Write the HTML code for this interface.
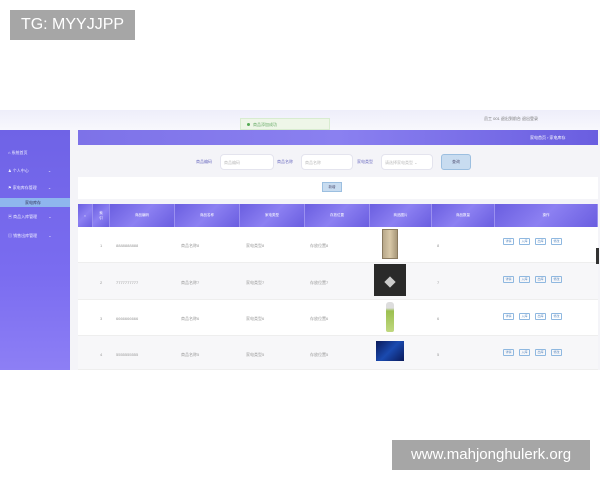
<!DOCTYPE html>
<html><head><meta charset="utf-8"><style>
*{margin:0;padding:0;box-sizing:border-box}
body{width:600px;height:480px;background:#fff;position:relative;overflow:hidden;font-family:"Liberation Sans","Noto Sans CJK SC",sans-serif}
.a{position:absolute}
.t{font-size:4px;color:#888;white-space:nowrap}
.side{left:0;top:130px;width:70px;height:240px;background:linear-gradient(180deg,#6f63e6,#7a6cf0 60%,#8d7ff5)}
.mi{position:absolute;left:8px;font-size:4px;color:#eef;white-space:nowrap}
.th{position:absolute;top:204px;height:23px;background:linear-gradient(135deg,#6a5ee0,#8c80f2 50%,#6a5ee0);border-right:1px solid #9a90f0;font-size:3.5px;color:#fff;display:flex;align-items:center;justify-content:center}
.row{position:absolute;left:78px;width:520px;border-bottom:1px solid #eee}
.c{position:absolute;font-size:4px;color:#999;white-space:nowrap}
.b{position:absolute;width:11px;height:7px;border:1px solid #8fb8e0;border-radius:1px;font-size:3px;color:#5a8ac0;text-align:center;line-height:5px}
</style></head><body>
<div class="a" style="left:10px;top:10px;width:125px;height:30px;background:#a6a6a6;color:#fff;font-size:16px;line-height:30px;text-align:center">TG: MYYJJPP</div>
<div class="a" style="left:392px;top:440px;width:198px;height:30px;background:#a6a6a6;color:#fff;font-size:15px;line-height:30px;text-align:center">www.mahjonghulerk.org</div>

<div class="a" style="left:0;top:110px;width:600px;height:20px;background:linear-gradient(180deg,#eeeefa,#f8f8fd)"></div>
<div class="a t" style="left:484px;top:116px;color:#777">员工 001 退出到前台 退出登录</div>
<div class="a" style="left:240px;top:118px;width:90px;height:12px;background:#eef6e8;border:1px solid #d8ecd0"><span style="position:absolute;left:6px;top:4px;width:3px;height:3px;border-radius:50%;background:#5a5"></span><span class="t" style="position:absolute;left:12px;top:3px;color:#6a6">商品添加成功</span></div>

<div class="a side"></div>
<div class="mi" style="top:150px">⌂ 系统首页</div>
<div class="mi" style="top:168px">♟ 个人中心 <span style="margin-left:18px">⌄</span></div>
<div class="mi" style="top:185px">⚑ 家电库存管理 <span style="margin-left:10px">⌄</span></div>
<div class="a" style="left:0;top:198px;width:70px;height:9px;background:#8fb6ee"></div>
<div class="mi" style="top:200px;left:25px;color:#335">家电库存</div>
<div class="mi" style="top:214px">▣ 商品入库管理 <span style="margin-left:10px">⌄</span></div>
<div class="mi" style="top:233px">▤ 销售出库管理 <span style="margin-left:10px">⌄</span></div>

<div class="a" style="left:70px;top:130px;width:530px;height:240px;background:#f4f4f8"></div>
<div class="a" style="left:78px;top:130px;width:520px;height:15px;background:linear-gradient(90deg,#7d72e8,#8a80f0 50%,#6a5ee0)"></div>
<div class="a t" style="left:530px;top:135px;color:#fff">家电首页 › 家电库存</div>

<div class="a t" style="left:196px;top:159px;color:#6a6ac0">商品编码</div>
<div class="a" style="left:220px;top:154px;width:54px;height:16px;background:#fff;border:1px solid #e4e4ee;border-radius:4px"><span class="t" style="position:absolute;left:3px;top:5px;color:#bbb">商品编码</span></div>
<div class="a t" style="left:277px;top:159px;color:#6a6ac0">商品名称</div>
<div class="a" style="left:301px;top:154px;width:52px;height:16px;background:#fff;border:1px solid #e4e4ee;border-radius:4px"><span class="t" style="position:absolute;left:3px;top:5px;color:#bbb">商品名称</span></div>
<div class="a t" style="left:357px;top:159px;color:#6a6ac0">家电类型</div>
<div class="a" style="left:381px;top:154px;width:52px;height:16px;background:#fff;border:1px solid #e4e4ee;border-radius:4px"><span class="t" style="position:absolute;left:3px;top:5px;color:#bbb">请选择家电类型 ⌄</span></div>
<div class="a" style="left:441px;top:154px;width:30px;height:16px;background:#c8dcf0;border:1px solid #9cbfe0;border-radius:3px;font-size:4px;color:#557;text-align:center;line-height:14px">查询</div>

<div class="a" style="left:78px;top:177px;width:520px;height:22px;background:#fff"></div>
<div class="a" style="left:322px;top:182px;width:20px;height:10px;background:#c8dcf0;border:1px solid #9cbfe0;font-size:3.5px;color:#557;text-align:center;line-height:8px">新增</div>

<div class="th" style="left:78px;width:15px">▪</div>
<div class="th" style="left:93px;width:17px">索<br>引</div>
<div class="th" style="left:110px;width:65px">商品编码</div>
<div class="th" style="left:175px;width:65px">商品名称</div>
<div class="th" style="left:240px;width:65px">家电类型</div>
<div class="th" style="left:305px;width:65px">存放位置</div>
<div class="th" style="left:370px;width:62px">商品图片</div>
<div class="th" style="left:432px;width:63px">商品数量</div>
<div class="th" style="left:495px;width:103px">操作</div>

<div class="row" style="top:227px;height:36px;background:#fff"></div>
<div class="row" style="top:263px;height:37px;background:#f7f7f9"></div>
<div class="row" style="top:300px;height:36px;background:#fff"></div>
<div class="row" style="top:336px;height:34px;background:#f7f7f9"></div>

<div class="c" style="left:100px;top:243px">1</div><div class="c" style="left:116px;top:243px">8888888888</div><div class="c" style="left:181px;top:243px">商品名称8</div><div class="c" style="left:246px;top:243px">家电类型8</div><div class="c" style="left:310px;top:243px">存放位置8</div><div class="c" style="left:437px;top:243px">8</div>
<div class="c" style="left:100px;top:280px">2</div><div class="c" style="left:116px;top:280px">7777777777</div><div class="c" style="left:181px;top:280px">商品名称7</div><div class="c" style="left:246px;top:280px">家电类型7</div><div class="c" style="left:310px;top:280px">存放位置7</div><div class="c" style="left:437px;top:280px">7</div>
<div class="c" style="left:100px;top:316px">3</div><div class="c" style="left:116px;top:316px">6666666666</div><div class="c" style="left:181px;top:316px">商品名称6</div><div class="c" style="left:246px;top:316px">家电类型6</div><div class="c" style="left:310px;top:316px">存放位置6</div><div class="c" style="left:437px;top:316px">6</div>
<div class="c" style="left:100px;top:352px">4</div><div class="c" style="left:116px;top:352px">5555555555</div><div class="c" style="left:181px;top:352px">商品名称5</div><div class="c" style="left:246px;top:352px">家电类型5</div><div class="c" style="left:310px;top:352px">存放位置5</div><div class="c" style="left:437px;top:352px">5</div>

<div class="a" style="left:382px;top:229px;width:16px;height:30px;background:linear-gradient(90deg,#b8a88a,#d8c8a8,#a8987a);border:1px solid #8a7a60"></div>
<div class="a" style="left:374px;top:264px;width:32px;height:32px;background:#2a2a2a"></div>
<div class="a" style="left:386px;top:278px;width:8px;height:8px;background:#ccc;transform:rotate(45deg)"></div>
<div class="a" style="left:386px;top:302px;width:8px;height:30px;background:linear-gradient(180deg,#ddd 0,#ddd 20%,#9cc050 30%,#c0d880);border-radius:3px 3px 2px 2px"></div>
<div class="a" style="left:376px;top:341px;width:28px;height:20px;background:linear-gradient(135deg,#0a1a5a,#1a4ab0 50%,#0a1a5a)"></div>

<div class="b" style="left:503px;top:238px">详情</div><div class="b" style="left:519px;top:238px">入库</div><div class="b" style="left:535px;top:238px">出库</div><div class="b" style="left:551px;top:238px">修改</div>
<div class="b" style="left:503px;top:276px">详情</div><div class="b" style="left:519px;top:276px">入库</div><div class="b" style="left:535px;top:276px">出库</div><div class="b" style="left:551px;top:276px">修改</div>
<div class="b" style="left:503px;top:313px">详情</div><div class="b" style="left:519px;top:313px">入库</div><div class="b" style="left:535px;top:313px">出库</div><div class="b" style="left:551px;top:313px">修改</div>
<div class="b" style="left:503px;top:349px">详情</div><div class="b" style="left:519px;top:349px">入库</div><div class="b" style="left:535px;top:349px">出库</div><div class="b" style="left:551px;top:349px">修改</div>
<div class="a" style="left:596px;top:248px;width:3px;height:16px;background:#333"></div>
</body></html>
